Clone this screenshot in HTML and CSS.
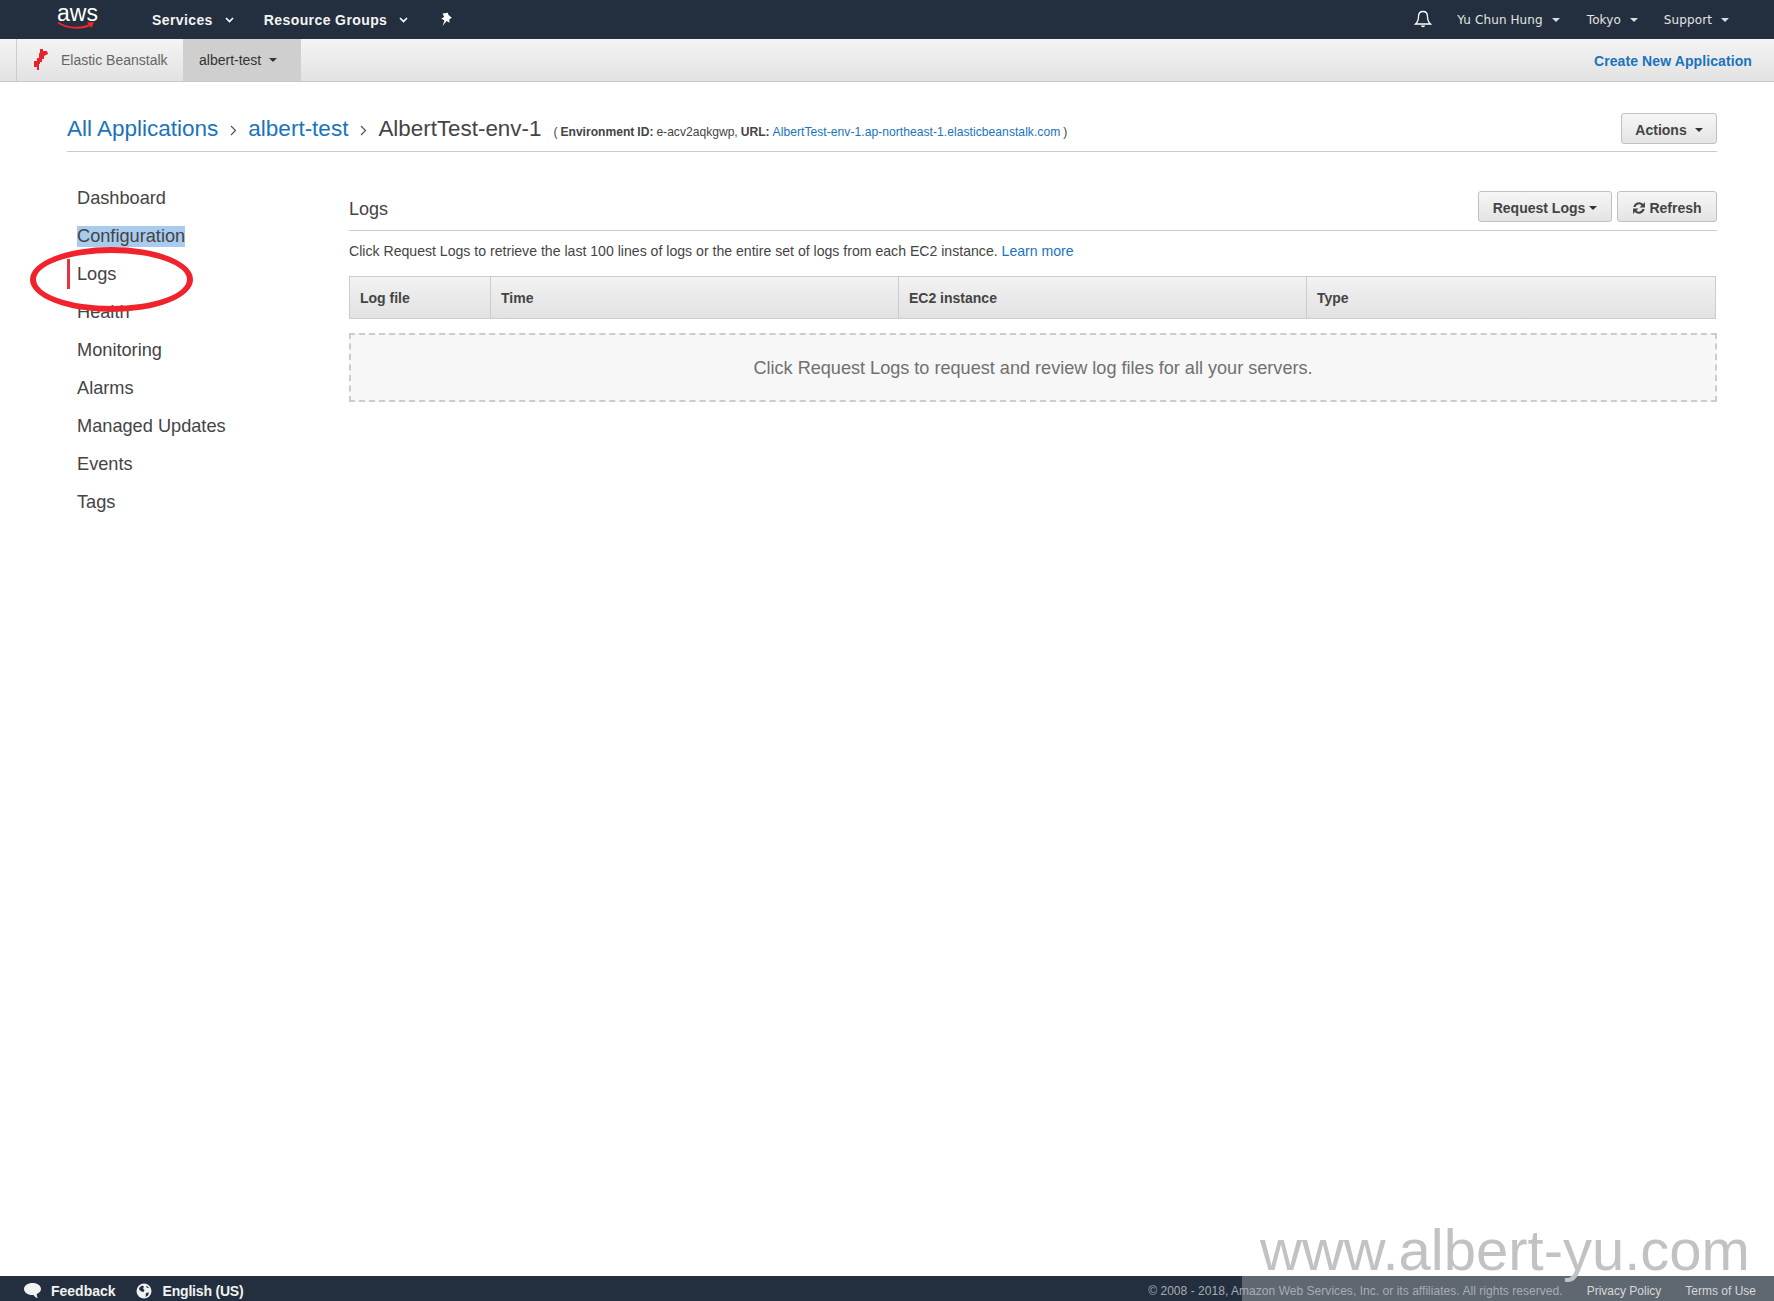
FILE: index.html
```html
<!DOCTYPE html>
<html lang="en">
<head>
<meta charset="utf-8">
<title>Elastic Beanstalk Logs</title>
<link rel="stylesheet" href="styles.css">
</head>
<body>
<div class="page">
  <header class="topnav">
    <div class="aws-logo">
      <span class="aws-word">aws</span>
      <svg class="aws-smile" width="38" height="10" viewBox="0 0 38 10"><path d="M1 1.500C10 7.500 24 8.500 34 3.500" fill="none" stroke="#f0242c" stroke-width="2"/><path d="M30 1.500L37 1L34.500 7Z" fill="#f0242c"/></svg>
    </div>
    <a class="nav-main nav-services">Services<svg class="chev" width="9" height="6" viewBox="0 0 9 6"><path d="M1 1l3.500 3.500L8 1" fill="none" stroke="#fff" stroke-width="1.600"/></svg></a>
    <a class="nav-main nav-groups">Resource Groups<svg class="chev" width="9" height="6" viewBox="0 0 9 6"><path d="M1 1l3.500 3.500L8 1" fill="none" stroke="#fff" stroke-width="1.600"/></svg></a>
    <svg class="pin" width="14" height="15" viewBox="0 0 14 15"><path d="M2.500 1.500L8 .8l.3 2 3.500 3-2.600 1.700.4 3.300-3-1.700L2.500 14l2-5.500-3.300-2 3-1.500Z" fill="#fff"/></svg>
    <div class="nav-spacer"></div>
    <svg class="bell" width="18" height="19" viewBox="0 0 18 19"><path d="M9 1.500c-3 0-4.500 2.300-4.500 5 0 3.500-.8 5.500-3 7.500h15c-2.200-2-3-4-3-7.500 0-2.700-1.500-5-4.500-5Z" fill="none" stroke="#fff" stroke-width="1.300"/><path d="M6.800 15.500a2.300 2.300 0 0 0 4.400 0Z" fill="#fff"/></svg>
    <a class="nav-user nav-name">Yu Chun Hung<i class="caret caret-nav"></i></a>
    <a class="nav-user nav-region">Tokyo<i class="caret caret-nav"></i></a>
    <a class="nav-user nav-support">Support<i class="caret caret-nav"></i></a>
  </header>

  <div class="subnav">
    <div class="sub-brand">
      <svg width="16" height="24" viewBox="0 0 16 24"><path d="M7 1h3v2h4l1 3-4 2v3H9v3H7v2H6v6H4v-3H1v-6h3v-3h2V6l1-2Z" fill="#e8212e"/></svg>
      <span>Elastic Beanstalk</span>
    </div>
    <div class="sub-app">albert-test<i class="caret caret-dark"></i></div>
    <a class="sub-create">Create New Application</a>
  </div>

  <main class="content">
    <div class="crumb-row">
      <div class="crumbs">
        <a class="crumb-link">All Applications</a>
        <svg class="crumb-sep" width="7" height="11" viewBox="0 0 7 11"><path d="M1 1l4.500 4.500L1 10" fill="none" stroke="#555" stroke-width="1.200"/></svg>
        <a class="crumb-link">albert-test</a>
        <svg class="crumb-sep" width="7" height="11" viewBox="0 0 7 11"><path d="M1 1l4.500 4.500L1 10" fill="none" stroke="#555" stroke-width="1.200"/></svg>
        <span class="crumb-current">AlbertTest-env-1</span>
        <span class="env-info">( <b>Environment ID:</b> e-acv2aqkgwp, <b>URL:</b> <a>AlbertTest-env-1.ap-northeast-1.elasticbeanstalk.com</a> )</span>
      </div>
      <button class="btn btn-actions"><span class="btn-text">Actions</span><i class="caret caret-dark caret-actions"></i></button>
    </div>

    <div class="columns">
      <nav class="side">
        <a class="side-item">Dashboard</a>
        <a class="side-item"><span class="selected">Configuration</span></a>
        <a class="side-item side-active">Logs</a>
        <a class="side-item">Health</a>
        <a class="side-item">Monitoring</a>
        <a class="side-item">Alarms</a>
        <a class="side-item">Managed Updates</a>
        <a class="side-item">Events</a>
        <a class="side-item">Tags</a>
      </nav>
      <section class="panel">
        <div class="panel-head">
          <h2>Logs</h2>
          <div class="panel-btns">
            <button class="btn btn-request"><span class="btn-text btn-text-low">Request Logs</span><i class="caret caret-dark caret-request"></i></button>
            <button class="btn btn-refresh"><svg class="refresh-icon" width="14" height="14" viewBox="0 0 13 13"><path d="M1.300 5.500A5.300 5.300 0 0 1 10.300 2.700L12 1V6H7l1.800-1.800A3.200 3.200 0 0 0 3.300 5.500ZM11.700 7.500A5.300 5.300 0 0 1 2.700 10.300L1 12V7h5L4.200 8.800a3.200 3.200 0 0 0 5.500-1.300Z" fill="#444"/></svg><span class="btn-text btn-text-low">Refresh</span></button>
          </div>
        </div>
        <p class="desc">Click Request Logs to retrieve the last 100 lines of logs or the entire set of logs from each EC2 instance. <a>Learn more</a></p>
        <div class="thead">
          <div class="th th-file">Log file</div>
          <div class="th th-col">Time</div>
          <div class="th th-col">EC2 instance</div>
          <div class="th th-col">Type</div>
        </div>
        <div class="empty">Click Request Logs to request and review log files for all your servers.</div>
      </section>
    </div>
  </main>

  <footer class="footer">
    <svg class="foot-icon" width="19" height="17" viewBox="0 0 19 17"><path d="M9.500 1C4.800 1 1 3.600 1 7s3.800 6 8 6c.6 0 1 0 1.500-.1.800 1.500 2.500 3 4.500 3.100-.9-1-1.300-2.300-1.300-4.100C16.600 10.800 18 9 18 7c0-3.400-3.800-6-8.500-6Z" fill="#f2f2f2"/></svg>
    <a class="foot-link foot-feedback">Feedback</a>
    <svg class="foot-icon" width="16" height="16" viewBox="0 0 16 16"><circle cx="8" cy="8" r="7.500" fill="#f2f2f2"/><path d="M3 5l3-2.500 2 1-1 2 1.500 1.500-1 2-2-.5L3.500 7ZM10 10l3-.5-1 3-2.500 1.500ZM10 2.500l3 2-2 .5Z" fill="#232f3e"/></svg>
    <a class="foot-link foot-lang">English (US)</a>
    <div class="foot-legal">
      <span class="copyright">© 2008 - 2018, Amazon Web Services, Inc. or its affiliates. All rights reserved.</span>
      <a>Privacy Policy</a>
      <a>Terms of Use</a>
    </div>
  </footer>

  <div class="wm-shade"></div>
  <div class="watermark">www.albert-yu.com</div>
  <div class="ring"></div>
</div>
</body>
</html>
```

FILE: styles.css
```css
* { box-sizing: border-box; }
html, body { margin: 0; padding: 0; }
body {
  font-family: "Liberation Sans", Arial, sans-serif;
  color: #444;
  background: #fff;
}
a { cursor: pointer; }
.page {
  position: relative;
  width: 1774px;
  height: 1301px;
  display: flex;
  flex-direction: column;
  overflow: hidden;
}

/* top bar */
.topnav {
  height: 39px;
  flex: none;
  background: #232f3e;
  display: flex;
  align-items: center;
  color: #fff;
}
.aws-logo {
  position: relative;
  width: 38px;
  height: 39px;
  margin-left: 57px;
}
.aws-word {
  position: absolute;
  left: 0;
  top: 0;
  font-size: 23px;
  line-height: 26px;
}
.aws-smile { position: absolute; left: 0; top: 21px; }
.nav-main {
  font-size: 14px;
  font-weight: bold;
  display: flex;
  align-items: center;
  color: #f4f4f4;
  letter-spacing: .4px;
}
.nav-services { margin-left: 57px; }
.nav-groups { margin-left: 30px; }
.chev { margin-left: 12px; }
.pin { margin-left: 32px; margin-top: -1px; }
.nav-spacer { flex: 1; }
.bell { margin-right: 25px; }
.nav-user {
  font-family: "DejaVu Sans", Verdana, sans-serif;
  font-size: 12px;
  display: flex;
  align-items: center;
  color: #e4e4e4;
  letter-spacing: .1px;
}
.nav-name { margin-right: 27px; }
.nav-region { margin-right: 26px; }
.nav-support { margin-right: 45px; }
.caret {
  display: inline-block;
  width: 0;
  height: 0;
  border-left: 4px solid transparent;
  border-right: 4px solid transparent;
}
.caret-nav { border-top: 4px solid #ddd; margin-left: 9px; }
.caret-dark { border-top: 4px solid #333; margin-left: 8px; }

/* secondary bar */
.subnav {
  height: 43px;
  flex: none;
  display: flex;
  align-items: stretch;
  background: linear-gradient(#f4f4f4, #e2e2e2);
  border-bottom: 1px solid #c8c8c8;
}
.sub-brand {
  display: flex;
  align-items: center;
  margin-left: 16px;
  padding-left: 16px;
  width: 167px;
  border-left: 1px solid #ccc;
  font-size: 14px;
  color: #666;
  gap: 12px;
}
.sub-app {
  width: 118px;
  padding-left: 16px;
  display: flex;
  align-items: center;
  background: #cfcfcf;
  font-size: 14px;
  color: #333;
}
.sub-create {
  margin-left: auto;
  margin-right: 22px;
  align-self: center;
  padding-top: 2px;
  font-size: 14px;
  font-weight: bold;
  color: #1a73bd;
  letter-spacing: .1px;
}

/* content */
.content {
  flex: 1;
  padding: 0 57px 0 67px;
}
.crumb-row {
  height: 70px;
  display: flex;
  align-items: flex-end;
  justify-content: space-between;
  border-bottom: 1px solid #ccc;
  padding-bottom: 7px;
}
.crumbs {
  display: flex;
  align-items: baseline;
  padding-bottom: 2px;
}
.crumb-link { font-size: 22.5px; color: #1a73bd; }
.crumb-sep { margin: 0 11px 0 12px; }
.crumb-current { font-size: 22.4px; color: #444; }
.env-info { font-size: 12.1px; margin-left: 12px; color: #444; word-spacing: -.4px; }
.env-info a { color: #1a73bd; letter-spacing: .04px; }

.btn {
  font-family: "Liberation Sans", Arial, sans-serif;
  font-size: 14px;
  font-weight: bold;
  color: #444;
  height: 31px;
  padding: 0;
  border: 1px solid #c0c0c0;
  border-radius: 3px;
  background: linear-gradient(#f6f6f6, #e4e4e4);
  display: inline-flex;
  align-items: center;
  justify-content: center;
}
.btn-text { padding-top: 2px; }
.btn-text-low { padding-top: 3px; }
.btn-actions { width: 96px; }
.caret-actions { margin-left: 8px; margin-top: 2px; }
.btn-request { width: 134px; }
.caret-request { margin-left: 4px; margin-top: 3px; }
.btn-refresh { width: 100px; gap: 3px; }
.refresh-icon { margin-top: 3px; }

.columns { display: flex; }
.side {
  width: 282px;
  flex: none;
  display: flex;
  flex-direction: column;
  padding-top: 27px;
}
.side-item {
  height: 38px;
  display: flex;
  align-items: center;
  padding-left: 10px;
  font-size: 18.2px;
  color: #444;
  line-height: 30px;
}
.side-active { position: relative; }
.side-active::before {
  content: "";
  position: absolute;
  left: 0;
  top: 4px;
  width: 3px;
  height: 30px;
  background: #e8333c;
}
.selected { background: #a9cbee; line-height: 21px; }

.panel { flex: 1; padding-top: 39px; }
.panel-head {
  height: 40px;
  display: flex;
  align-items: center;
  justify-content: space-between;
  border-bottom: 1px solid #ccc;
  padding-bottom: 9px;
}
.panel-head h2 { margin: 0; font-size: 18px; font-weight: normal; color: #444; padding-top: 7px; }
.panel-btns { display: flex; gap: 5px; }
.desc { margin: 12px 0 0; font-size: 14.1px; line-height: 16px; color: #444; }
.desc a { color: #1a73bd; }
.thead {
  margin-top: 17px;
  height: 43px;
  display: grid;
  grid-template-columns: 140px 408px 408px 1fr;
  border: 1px solid #ccc;
  background: linear-gradient(#f2f2f2, #e2e2e2);
  margin-right: 1px;
}
.th {
  display: flex;
  align-items: center;
  padding-left: 10px;
  font-size: 14px;
  font-weight: bold;
  color: #444;
}
.th-col { border-left: 1px solid #ccc; }
.empty {
  margin-top: 14px;
  height: 69px;
  padding-top: 2px;
  border: 2px dashed #ccc;
  background: #f7f7f7;
  display: flex;
  align-items: center;
  justify-content: center;
  font-size: 18.1px;
  color: #707070;
}

/* footer */
.footer {
  height: 25px;
  flex: none;
  background: #232f3e;
  display: flex;
  align-items: center;
  padding-left: 23px;
  font-size: 14px;
}
.foot-icon { margin-top: 4px; }
.foot-link { font-weight: bold; color: #f2f2f2; padding-top: 5px; }
.foot-feedback { margin: 0 20px 0 9px; }
.foot-lang { margin-left: 11px; letter-spacing: -.2px; }
.foot-legal {
  position: relative;
  z-index: 2;
  margin-left: auto;
  margin-right: 18px;
  padding-top: 5px;
  display: flex;
  gap: 24px;
  font-size: 12px;
  color: #d8d8d8;
}
.copyright { color: #a8adb3; letter-spacing: .04px; }

/* overlays */
.wm-shade {
  position: absolute;
  left: 1242px;
  top: 1276px;
  width: 532px;
  height: 25px;
  background: #5f6770;
}
.watermark {
  position: absolute;
  left: 1260px;
  top: 1220px;
  font-size: 58px;
  line-height: 60px;
  color: #c2c2c2;
  white-space: nowrap;
}
.ring {
  position: absolute;
  left: 30px;
  top: 247px;
  width: 163px;
  height: 65px;
  border: 6px solid #f0222b;
  border-radius: 50%;
}
```
